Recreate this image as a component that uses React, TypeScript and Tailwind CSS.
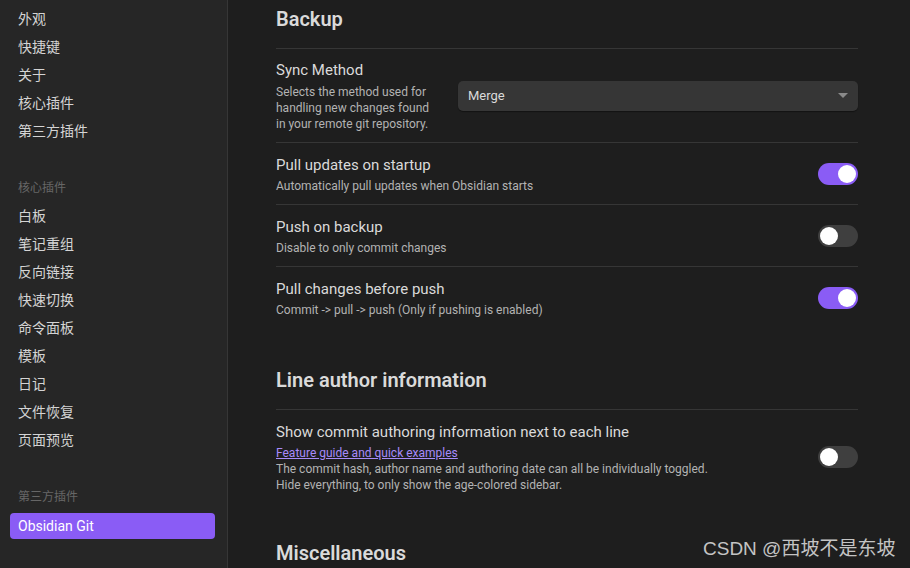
import React from "react";

const font = { fontFamily: 'Roboto, "Noto Sans CJK SC", sans-serif' };

function Toggle({ on }: { on: boolean }) {
  return (
    <div
      className={
        "relative h-[22px] w-[40px] shrink-0 rounded-full " +
        (on ? "bg-[#8a5cf5]" : "bg-[#3f3f3f]")
      }
    >
      <div
        className={
          "absolute top-[2px] h-[18px] w-[18px] rounded-full bg-white " +
          (on ? "right-[2px]" : "left-[2px]")
        }
      />
    </div>
  );
}

function SideItem({ label }: { label: string }) {
  return (
    <div className="flex h-[28px] items-center pl-[18px] text-[14px] text-[#d4d4d4]">{label}</div>
  );
}

function SideHeader({ label }: { label: string }) {
  return (
    <div className="mt-[28px] flex h-[29px] items-center pl-[18px] text-[12px] text-[#666666]">
      {label}
    </div>
  );
}

function Item({
  title,
  children,
  control,
}: {
  title: string;
  children: React.ReactNode;
  control: React.ReactNode;
}) {
  return (
    <div className="flex items-center border-t border-[#363636] pt-[11px] pb-[10px]">
      <div className="flex-1">
        <div className="pt-[1px] text-[15px] leading-[20px] text-[#dadada]">{title}</div>
        <div className="mt-[3px] text-[12px] leading-[16px] text-[#b3b3b3]">{children}</div>
      </div>
      {control}
    </div>
  );
}

function Heading({ label, mt }: { label: string; mt: string }) {
  return (
    <div className={"pb-[15px] text-[20px] font-semibold leading-[28px] text-[#dadada] " + mt}>
      {label}
    </div>
  );
}

export default function App() {
  return (
    <div className="relative flex h-[568px] w-[910px] overflow-hidden bg-[#1e1e1e]" style={font}>
      <div className="w-[228px] shrink-0 border-r border-[#363636] bg-[#262626] pt-[5px]">
        <SideItem label="外观" />
        <SideItem label="快捷键" />
        <SideItem label="关于" />
        <SideItem label="核心插件" />
        <SideItem label="第三方插件" />
        <SideHeader label="核心插件" />
        <SideItem label="白板" />
        <SideItem label="笔记重组" />
        <SideItem label="反向链接" />
        <SideItem label="快速切换" />
        <SideItem label="命令面板" />
        <SideItem label="模板" />
        <SideItem label="日记" />
        <SideItem label="文件恢复" />
        <SideItem label="页面预览" />
        <SideHeader label="第三方插件" />
        <div className="ml-[10px] mr-[12px] mt-[2px] flex h-[26px] items-center rounded-[4px] bg-[#8a5cf5] pl-[8px] text-[14px] text-white">
          Obsidian Git
        </div>
      </div>

      <div className="flex-1 pl-[48px] pr-[52px]">
        <Heading label="Backup" mt="pt-[5px]" />
        <div className="flex items-center border-t border-[#363636] pt-[11px] pb-[10px]">
          <div className="w-[156px] shrink-0">
            <div className="text-[15px] leading-[20px] text-[#dadada]">Sync Method</div>
            <div className="mt-[4px] text-[12px] leading-[16px] text-[#b3b3b3]">
              Selects the method used for handling new changes found in your remote git repository.
            </div>
          </div>
          <div className="ml-[26px] flex h-[30px] flex-1 items-center justify-between rounded-[5px] bg-[#363636] pl-[10px] pr-[10px] text-[13px] text-[#dadada] shadow-[0_1px_1px_rgba(0,0,0,0.4)]">
            <span>Merge</span>
            <svg width="10" height="6" viewBox="0 0 10 6">
              <path d="M0 0 L10 0 L5 5 Z" fill="#8a8a8a" />
            </svg>
          </div>
        </div>
        <Item title="Pull updates on startup" control={<Toggle on />}>
          Automatically pull updates when Obsidian starts
        </Item>
        <Item title="Push on backup" control={<Toggle on={false} />}>
          Disable to only commit changes
        </Item>
        <Item title="Pull changes before push" control={<Toggle on />}>
          Commit -&gt; pull -&gt; push (Only if pushing is enabled)
        </Item>

        <Heading label="Line author information" mt="mt-[38px]" />
        <Item title="Show commit authoring information next to each line" control={<Toggle on={false} />}>
          <div className="text-[#a88bfa] underline">Feature guide and quick examples</div>
          <div>The commit hash, author name and authoring date can all be individually toggled.</div>
          <div>Hide everything, to only show the age-colored sidebar.</div>
        </Item>

        <Heading label="Miscellaneous" mt="mt-[36px]" />
      </div>

      <div
        className="absolute left-[703px] top-[535px] text-[19px] leading-[28px] text-[#c4c4c4]"
        style={{ fontFamily: '"Liberation Sans", "Noto Sans CJK SC", sans-serif' }}
      >
        CSDN @西坡不是东坡
      </div>
    </div>
  );
}
